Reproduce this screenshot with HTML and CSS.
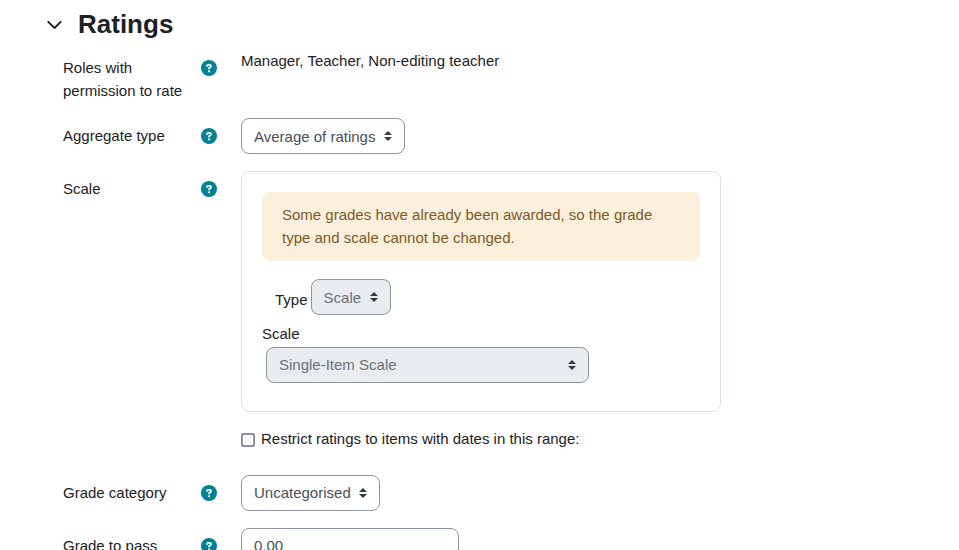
FILE: index.html
```html
<!DOCTYPE html>
<html lang="en">
<head>
    <meta charset="UTF-8">
    <meta name="viewport" content="width=device-width, initial-scale=1.0">
    <title>Ratings</title>
    <link rel="stylesheet" href="styles.css">
</head>
<body>
    <!-- shared help icon -->
    <svg class="sprite" aria-hidden="true">
        <symbol id="help" viewBox="0 0 16 16">
            <circle cx="8" cy="8" r="8" fill="#008196"/>
            <path d="M6 6.1C6 5.3 6.6 4.9 7.3 4.9h1.3c.8 0 1.4.5 1.4 1.2 0 .5-.3.9-.7 1.1L8.1 8v.6" fill="none" stroke="#fff" stroke-width="1.8" stroke-linecap="round" stroke-linejoin="round"/>
            <circle cx="8.1" cy="11.3" r="1.1" fill="#fff"/>
        </symbol>
    </svg>

    <form id="ratingsForm" class="ratings" method="post">
        <div class="section-header">
            <button type="button" class="toggle" aria-label="Collapse Ratings" aria-expanded="true">
                <svg width="16" height="16" viewBox="0 0 16 16"><path d="M2.3 5.8L8.5 12 14.7 5.8" fill="none" stroke="#1d2125" stroke-width="1.9" stroke-linecap="round" stroke-linejoin="round"/></svg>
            </button>
            <h3>Ratings</h3>
        </div>

        <div class="form-row">
            <div class="row-label">
                <span>Roles with permission to rate</span>
                <button type="button" class="help" aria-label="Help with roles"><svg><use href="#help"/></svg></button>
            </div>
            <div class="field">Manager, Teacher, Non-editing teacher</div>
        </div>

        <div class="form-row">
            <div class="row-label">
                <label for="aggregateType">Aggregate type</label>
                <button type="button" class="help" aria-label="Help with aggregate type"><svg><use href="#help"/></svg></button>
            </div>
            <div class="field">
                <select id="aggregateType" name="assessed" class="control">
                    <option>Average of ratings</option>
                </select>
            </div>
        </div>

        <div class="form-row">
            <div class="row-label">
                <span>Scale</span>
                <button type="button" class="help" aria-label="Help with scale"><svg><use href="#help"/></svg></button>
            </div>
            <div class="field">
                <div class="scale-box">
                    <div class="alert">Some grades have already been awarded, so the grade type and scale cannot be changed.</div>
                    <div class="type-line">
                        <label for="scaleType">Type</label>
                        <select id="scaleType" name="scaleType" class="control" disabled>
                            <option>Scale</option>
                        </select>
                    </div>
                    <label class="scale-label" for="scaleSelect">Scale</label>
                    <select id="scaleSelect" name="scale" class="control scale-select" disabled>
                        <option>Single-Item Scale</option>
                    </select>
                </div>
            </div>
        </div>

        <div class="form-row check-row">
            <div class="row-label"></div>
            <div class="field check">
                <input type="checkbox" id="rateTime" name="ratetime">
                <label for="rateTime">Restrict ratings to items with dates in this range:</label>
            </div>
        </div>

        <div class="form-row">
            <div class="row-label">
                <label for="gradeCategory">Grade category</label>
                <button type="button" class="help" aria-label="Help with grade category"><svg><use href="#help"/></svg></button>
            </div>
            <div class="field">
                <select id="gradeCategory" name="gradecat" class="control">
                    <option>Uncategorised</option>
                </select>
            </div>
        </div>

        <div class="form-row">
            <div class="row-label">
                <label for="gradePass">Grade to pass</label>
                <button type="button" class="help" aria-label="Help with grade to pass"><svg><use href="#help"/></svg></button>
            </div>
            <div class="field">
                <input type="text" id="gradePass" name="gradepass" class="control" value="0.00">
            </div>
        </div>
    </form>
</body>
</html>
```
FILE: styles.css
```css
* {
    box-sizing: border-box;
}

body {
    margin: 0;
    background-color: #fff;
    color: #1d2125;
    font-family: "Liberation Sans", Arial, sans-serif;
    font-size: 15px;
    line-height: 1.5;
}

.sprite {
    display: none;
}

.ratings {
    padding: 4px 24px 0 46px;
}

.section-header {
    display: flex;
    align-items: center;
    gap: 16px;
    height: 40px;
    margin-bottom: 6px;
}

.section-header h3 {
    margin: 0;
    font-size: 26px;
    font-weight: bold;
}

.toggle,
.help {
    display: flex;
    padding: 0;
    border: none;
    background: none;
    cursor: pointer;
}

/* Label column and field column */
.form-row {
    display: grid;
    grid-template-columns: 154px 1fr;
    column-gap: 24px;
    min-height: 37px;
    margin: 0 0 16px 17px;
}

.check-row {
    min-height: 31px;
}

.row-label {
    display: flex;
    align-items: flex-start;
    justify-content: space-between;
    gap: 16px;
    padding-top: 7px;
}

.help {
    flex-shrink: 0;
    margin-top: 3px;
}

.help svg {
    width: 16px;
    height: 16px;
}

.control {
    display: inline-block;
    height: 36px;
    padding: 0 12px;
    border: 1px solid #8f959e;
    border-radius: 8px;
    background-color: #fff;
    color: #495057;
    font-family: inherit;
    font-size: 15px;
    vertical-align: top;
}

select.control {
    appearance: none;
    padding-right: 28px;
    /* up and down arrows */
    background: #fff url("data:image/svg+xml,%3Csvg xmlns='http://www.w3.org/2000/svg' viewBox='0 0 4 5'%3E%3Cpath fill='%23343a40' d='M2 0L0 2h4zm0 5L0 3h4z'/%3E%3C/svg%3E") no-repeat right 12px center / 8px 10px;
}

select.control:disabled {
    background-color: #e9ecef;
    color: #6a737b;
    opacity: 1;
}

input.control {
    width: 218px;
}

.scale-box {
    max-width: 480px;
    padding: 20px 20px 28px;
    border: 1px solid #dee2e6;
    border-radius: 8px;
}

.alert {
    margin-bottom: 18px;
    padding: 12px 20px;
    border-radius: 8px;
    background-color: #fcefdc;
    color: #7d5a29;
}

.type-line {
    display: flex;
    align-items: center;
    gap: 3px;
    margin-bottom: 8px;
    padding-left: 13px;
}

.type-line label {
    padding-top: 6px;
}

.scale-label {
    display: block;
    margin-bottom: 1px;
}

.scale-select {
    width: 323px;
    max-width: 100%;
    margin-left: 4px;
}

.check {
    display: flex;
    align-items: flex-start;
    gap: 6px;
}

.check input {
    appearance: none;
    width: 14px;
    height: 14px;
    margin: 5px 0 0;
    border: 2px solid #8f8f9d;
    border-radius: 2px;
    background-color: #fff;
}

.check input:checked {
    background-color: #0f6cbf;
}
```
